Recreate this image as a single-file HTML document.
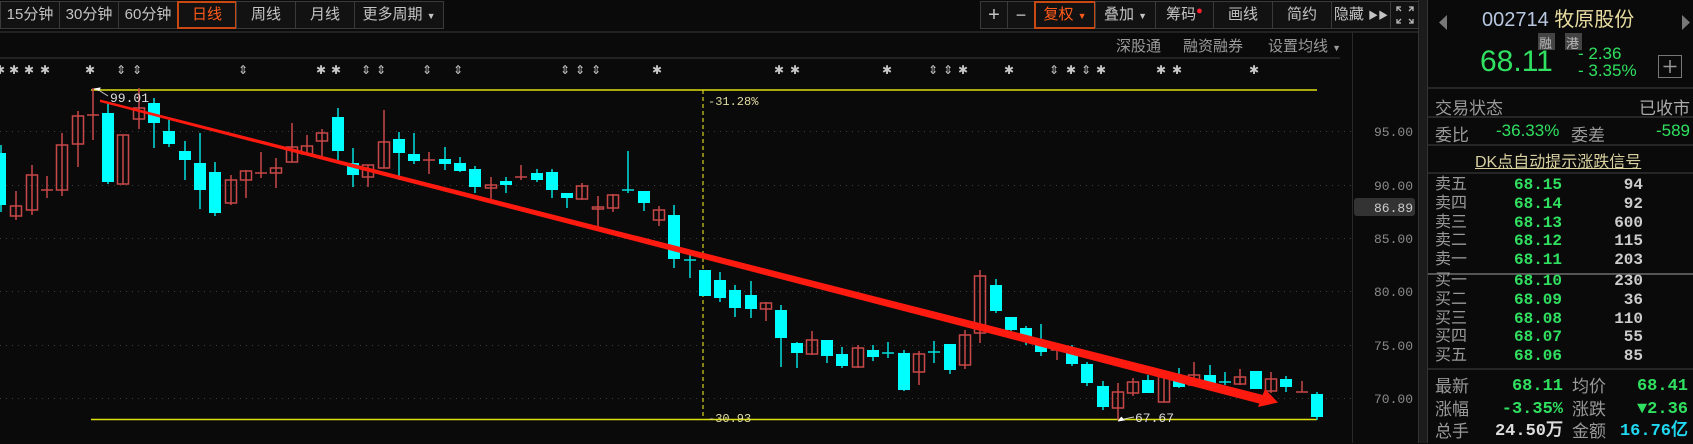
<!DOCTYPE html>
<html><head><meta charset="utf-8"><style>
*{margin:0;padding:0;box-sizing:border-box}
body{width:1693px;height:443px;background:#0a0a0a;overflow:hidden;position:relative;font-family:"Liberation Sans","Noto Sans CJK SC",sans-serif;color:#bbb}
.b{position:absolute;top:1px;height:28px;border:1px solid #3a3a3a;background:#121212;color:#c4c4c4;font-size:15px;line-height:26px;text-align:center}
.t{position:absolute;white-space:nowrap}
.g{color:#30e060}
.n{font-family:"Liberation Mono","Liberation Sans",monospace;font-weight:bold}
</style></head><body>
<div class="b" style="left:0;width:60px">15分钟</div>
<div class="b" style="left:59px;width:60px">30分钟</div>
<div class="b" style="left:118px;width:60px">60分钟</div>
<div class="b" style="left:177px;width:60px;border:2px solid #c84a12;color:#ff5a1a;line-height:24px">日线</div>
<div class="b" style="left:236px;width:60px">周线</div>
<div class="b" style="left:295px;width:60px">月线</div>
<div class="b" style="left:354px;width:90px">更多周期 <span style="font-size:9px">▼</span></div>

<div class="b" style="left:980px;width:28px;font-size:20px">+</div>
<div class="b" style="left:1007px;width:28px;font-size:18px">−</div>
<div class="b" style="left:1034px;width:62px;border:2px solid #c84a12;color:#ff5a1a;line-height:24px">复权 <span style="font-size:9px">▼</span></div>
<div class="b" style="left:1095px;width:61px">叠加 <span style="font-size:9px">▼</span></div>
<div class="b" style="left:1155px;width:59px">筹码<span style="color:#ff2030;font-size:11px;vertical-align:top;line-height:18px">●</span></div>
<div class="b" style="left:1213px;width:60px">画线</div>
<div class="b" style="left:1272px;width:60px">简约</div>
<div class="b" style="left:1331px;width:60px">隐藏 <span style="font-size:10px">▶▶</span></div>
<div class="b" style="left:1390px;width:29px;font-size:13px"><svg width="20" height="20" viewBox="0 0 20 20" style="margin-top:3px" stroke="#bbb" fill="none" stroke-width="1.3"><path d="M2 6V2h4M2 2l4 4M18 6V2h-4M18 2l-4 4M2 14v4h4M2 18l4-4M18 14v4h-4M18 18l-4-4"/></svg></div>

<div style="position:absolute;left:0;top:31px;width:1420px;height:2px;background:#222"></div>
<div style="position:absolute;left:0;top:57px;width:1340px;height:2px;background:#222"></div>
<div class="t" style="left:1116px;top:35px;font-size:15px;color:#9a9a9a">深股通</div>
<div class="t" style="left:1183px;top:35px;font-size:15px;color:#9a9a9a">融资融券</div>
<div class="t" style="left:1268px;top:35px;font-size:15px;color:#9a9a9a">设置均线 <span style="font-size:9px">▼</span></div>
<div style="position:absolute;left:1352px;top:31px;width:1px;height:412px;background:#2a2a2a"></div>
<div style="position:absolute;left:1418px;top:0;width:10px;height:443px;background:#1c1c1c;border-left:1px solid #333;border-right:1px solid #333"></div>

<svg style="position:absolute;left:0;top:0" width="1420" height="443">
<g stroke="#3c3c3c" stroke-dasharray="1,5" stroke-width="1">
<line x1="0" y1="131.5" x2="1352" y2="131.5"/><line x1="0" y1="185.5" x2="1352" y2="185.5"/><line x1="0" y1="238.5" x2="1352" y2="238.5"/><line x1="0" y1="291.5" x2="1352" y2="291.5"/><line x1="0" y1="345.5" x2="1352" y2="345.5"/><line x1="0" y1="398.5" x2="1352" y2="398.5"/>
</g>
<g font-family="Liberation Mono,monospace" font-size="13" fill="#8a8a8a">
<text x="1374" y="136">95.00</text><text x="1374" y="190">90.00</text><text x="1374" y="243">85.00</text><text x="1374" y="296">80.00</text><text x="1374" y="350">75.00</text><text x="1374" y="403">70.00</text>
</g>
<rect x="1354" y="198" width="61" height="18" rx="3" fill="#333"/>
<text x="1374" y="212" font-family="Liberation Mono,monospace" font-size="13" fill="#ccc">86.89</text>
<g font-family="DejaVu Sans,sans-serif" font-size="12" fill="#c8c8c8" text-anchor="middle">
<text x="0" y="74">✱</text><text x="14" y="74">✱</text><text x="29" y="74">✱</text><text x="45" y="74">✱</text><text x="90" y="74">✱</text><text x="121" y="74">⇕</text><text x="137" y="74">⇕</text><text x="243" y="74">⇕</text><text x="321" y="74">✱</text><text x="336" y="74">✱</text><text x="366" y="74">⇕</text><text x="381" y="74">⇕</text><text x="427" y="74">⇕</text><text x="458" y="74">⇕</text><text x="565" y="74">⇕</text><text x="580" y="74">⇕</text><text x="596" y="74">⇕</text><text x="657" y="74">✱</text><text x="779" y="74">✱</text><text x="795" y="74">✱</text><text x="887" y="74">✱</text><text x="933" y="74">⇕</text><text x="948" y="74">⇕</text><text x="963" y="74">✱</text><text x="1009" y="74">✱</text><text x="1054" y="74">⇕</text><text x="1071" y="74">✱</text><text x="1086" y="74">⇕</text><text x="1101" y="74">✱</text><text x="1161" y="74">✱</text><text x="1177" y="74">✱</text><text x="1254" y="74">✱</text>
</g>
<line x1="91" y1="90" x2="1317" y2="90" stroke="#e0e010" stroke-width="1.5"/>
<line x1="1110" y1="419.5" x2="1317" y2="419.5" stroke="#e0e010" stroke-width="1.5"/>
<line x1="91" y1="419.5" x2="1110" y2="419.5" stroke="#e0e010" stroke-width="1.5"/>
<line x1="703" y1="90" x2="703" y2="420" stroke="#d8d020" stroke-width="1.2" stroke-dasharray="4,3"/>
<g font-family="Liberation Mono,monospace" font-size="12" fill="#e0dca0">
<text x="708" y="105">-31.28%</text><text x="708" y="422">-30.93</text>
</g>
<g id="c">
<!-- candles -->
<g stroke="#c84848" stroke-width="1.5" fill="none">
<line x1="16" y1="191" x2="16" y2="220"/><rect x="10.5" y="206" width="11" height="10"/>
<line x1="32" y1="165" x2="32" y2="215"/><rect x="26.5" y="175" width="11" height="35"/>
<line x1="47" y1="176" x2="47" y2="198"/><line x1="41" y1="190" x2="53" y2="190"/>
<line x1="62" y1="133" x2="62" y2="196"/><rect x="56.5" y="145" width="11" height="45"/>
<line x1="78" y1="111" x2="78" y2="167"/><rect x="72.5" y="116" width="11" height="28"/>
<line x1="93" y1="88" x2="93" y2="140"/><line x1="87" y1="115" x2="99" y2="115"/>
<line x1="123" y1="135" x2="123" y2="185"/><rect x="117.5" y="135" width="11" height="49"/>
<line x1="139" y1="88" x2="139" y2="129"/><rect x="133.5" y="108" width="11" height="11"/>
<line x1="231" y1="175" x2="231" y2="205"/><rect x="225.5" y="180" width="11" height="23"/>
<line x1="246" y1="170" x2="246" y2="198"/><rect x="240.5" y="171" width="11" height="9"/>
<line x1="261" y1="152" x2="261" y2="178"/><line x1="255" y1="173" x2="267" y2="173"/>
<line x1="276" y1="158" x2="276" y2="188"/><rect x="270.5" y="168" width="11" height="5"/>
<line x1="292" y1="123" x2="292" y2="162"/><rect x="286.5" y="147" width="11" height="15"/>
<line x1="307" y1="135" x2="307" y2="154"/><rect x="301.5" y="146" width="11" height="8"/>
<line x1="322" y1="129" x2="322" y2="156"/><rect x="316.5" y="133" width="11" height="8"/>
<line x1="368" y1="165" x2="368" y2="187"/><rect x="362.5" y="165" width="11" height="12"/>
<line x1="384" y1="110" x2="384" y2="168"/><rect x="378.5" y="142" width="11" height="26"/>
<line x1="429" y1="152" x2="429" y2="174"/><line x1="423" y1="160" x2="435" y2="160"/>
<line x1="491" y1="177" x2="491" y2="203"/><rect x="485.5" y="185" width="11" height="3"/>
<line x1="521" y1="165" x2="521" y2="180"/><line x1="515" y1="177" x2="527" y2="177"/>
<line x1="582" y1="183" x2="582" y2="200"/><rect x="576.5" y="186" width="11" height="13"/>
<line x1="598" y1="196" x2="598" y2="230"/><rect x="592.5" y="207" width="11" height="2"/>
<line x1="613" y1="194" x2="613" y2="212"/><rect x="607.5" y="195" width="11" height="13"/>
<line x1="659" y1="206" x2="659" y2="226"/><rect x="653.5" y="210" width="11" height="10"/>
<line x1="766" y1="302" x2="766" y2="321"/><rect x="760.5" y="303" width="11" height="6"/>
<line x1="812" y1="331" x2="812" y2="355"/><rect x="806.5" y="340" width="11" height="14"/>
<line x1="858" y1="345" x2="858" y2="368"/><rect x="852.5" y="348" width="11" height="19"/>
<line x1="919" y1="351" x2="919" y2="385"/><rect x="913.5" y="354" width="11" height="18"/>
<line x1="965" y1="330" x2="965" y2="369"/><rect x="959.5" y="335" width="11" height="30"/>
<line x1="980" y1="270" x2="980" y2="343"/><rect x="974.5" y="276" width="11" height="57"/>
<line x1="1057" y1="345" x2="1057" y2="360"/><rect x="1051.5" y="348" width="11" height="2"/>
<line x1="1118" y1="383" x2="1118" y2="420"/><rect x="1112.5" y="392" width="11" height="16"/>
<line x1="1133" y1="378" x2="1133" y2="396"/><rect x="1127.5" y="382" width="11" height="11"/>
<line x1="1164" y1="375" x2="1164" y2="402"/><rect x="1158.5" y="375" width="11" height="27"/>
<line x1="1194" y1="362" x2="1194" y2="385"/><rect x="1188.5" y="375" width="11" height="10"/>
<line x1="1240" y1="369" x2="1240" y2="385"/><rect x="1234.5" y="377" width="11" height="7"/>
<line x1="1271" y1="372" x2="1271" y2="393"/><rect x="1265.5" y="379" width="11" height="12"/>
<line x1="1302" y1="381" x2="1302" y2="392"/><line x1="1296" y1="392" x2="1308" y2="392"/>
</g>
<g stroke="#00e0e0" stroke-width="1.5" fill="#00ffff">
<line x1="1" y1="145" x2="1" y2="212"/><rect x="-5" y="153" width="11" height="52" stroke="none"/>
<line x1="108" y1="103" x2="108" y2="184"/><rect x="102" y="113" width="12" height="69" stroke="none"/>
<line x1="154" y1="98" x2="154" y2="148"/><rect x="148" y="103" width="12" height="20" stroke="none"/>
<line x1="169" y1="120" x2="169" y2="147"/><rect x="163" y="131" width="12" height="13" stroke="none"/>
<line x1="185" y1="141" x2="185" y2="180"/><rect x="179" y="151" width="12" height="9" stroke="none"/>
<line x1="200" y1="133" x2="200" y2="209"/><rect x="194" y="163" width="12" height="27" stroke="none"/>
<line x1="215" y1="162" x2="215" y2="216"/><rect x="209" y="172" width="12" height="41" stroke="none"/>
<line x1="338" y1="108" x2="338" y2="160"/><rect x="332" y="117" width="12" height="34" stroke="none"/>
<line x1="353" y1="148" x2="353" y2="187"/><rect x="347" y="163" width="12" height="12" stroke="none"/>
<line x1="399" y1="132" x2="399" y2="180"/><rect x="393" y="139" width="12" height="14" stroke="none"/>
<line x1="414" y1="133" x2="414" y2="164"/><rect x="408" y="154" width="12" height="7" stroke="none"/>
<line x1="445" y1="147" x2="445" y2="170"/><rect x="439" y="159" width="12" height="5" stroke="none"/>
<line x1="460" y1="157" x2="460" y2="172"/><rect x="454" y="163" width="12" height="8" stroke="none"/>
<line x1="475" y1="166" x2="475" y2="193"/><rect x="469" y="169" width="12" height="18" stroke="none"/>
<line x1="506" y1="177" x2="506" y2="193"/><rect x="500" y="181" width="12" height="4" stroke="none"/>
<line x1="537" y1="169" x2="537" y2="182"/><rect x="531" y="173" width="12" height="7" stroke="none"/>
<line x1="552" y1="169" x2="552" y2="198"/><rect x="546" y="172" width="12" height="18" stroke="none"/>
<line x1="567" y1="193" x2="567" y2="208"/><rect x="561" y="193" width="12" height="5" stroke="none"/>
<line x1="628" y1="151" x2="628" y2="193"/><line x1="622" y1="190" x2="634" y2="190"/>
<line x1="644" y1="191" x2="644" y2="211"/><rect x="638" y="191" width="12" height="12" stroke="none"/>
<line x1="674" y1="205" x2="674" y2="268"/><rect x="668" y="215" width="12" height="44" stroke="none"/>
<line x1="690" y1="254" x2="690" y2="278"/><line x1="684" y1="260" x2="696" y2="260"/>
<line x1="705" y1="270" x2="705" y2="296"/><rect x="699" y="270" width="12" height="26" stroke="none"/>
<line x1="720" y1="272" x2="720" y2="302"/><rect x="714" y="280" width="12" height="18" stroke="none"/>
<line x1="735" y1="285" x2="735" y2="317"/><rect x="729" y="290" width="12" height="18" stroke="none"/>
<line x1="751" y1="281" x2="751" y2="318"/><rect x="745" y="295" width="12" height="14" stroke="none"/>
<line x1="781" y1="305" x2="781" y2="367"/><rect x="775" y="310" width="12" height="28" stroke="none"/>
<line x1="797" y1="342" x2="797" y2="368"/><rect x="791" y="343" width="12" height="10" stroke="none"/>
<line x1="827" y1="340" x2="827" y2="363"/><rect x="821" y="340" width="12" height="16" stroke="none"/>
<line x1="842" y1="347" x2="842" y2="368"/><rect x="836" y="354" width="12" height="12" stroke="none"/>
<line x1="873" y1="345" x2="873" y2="361"/><rect x="867" y="350" width="12" height="7" stroke="none"/>
<line x1="888" y1="342" x2="888" y2="358"/><line x1="882" y1="353" x2="894" y2="353"/>
<line x1="904" y1="350" x2="904" y2="391"/><rect x="898" y="353" width="12" height="37" stroke="none"/>
<line x1="934" y1="341" x2="934" y2="363"/><line x1="928" y1="352" x2="940" y2="352"/>
<line x1="950" y1="344" x2="950" y2="374"/><rect x="944" y="344" width="12" height="26" stroke="none"/>
<line x1="996" y1="279" x2="996" y2="313"/><rect x="990" y="285" width="12" height="26" stroke="none"/>
<line x1="1011" y1="317" x2="1011" y2="338"/><rect x="1005" y="317" width="12" height="13" stroke="none"/>
<line x1="1026" y1="326" x2="1026" y2="345"/><rect x="1020" y="328" width="12" height="12" stroke="none"/>
<line x1="1041" y1="324" x2="1041" y2="356"/><rect x="1035" y="345" width="12" height="7" stroke="none"/>
<line x1="1072" y1="345" x2="1072" y2="366"/><rect x="1066" y="352" width="12" height="12" stroke="none"/>
<line x1="1087" y1="362" x2="1087" y2="386"/><rect x="1081" y="364" width="12" height="19" stroke="none"/>
<line x1="1103" y1="381" x2="1103" y2="410"/><rect x="1097" y="386" width="12" height="21" stroke="none"/>
<line x1="1148" y1="375" x2="1148" y2="393"/><rect x="1142" y="380" width="12" height="13" stroke="none"/>
<line x1="1179" y1="368" x2="1179" y2="388"/><rect x="1173" y="380" width="12" height="7" stroke="none"/>
<line x1="1210" y1="365" x2="1210" y2="385"/><rect x="1204" y="375" width="12" height="8" stroke="none"/>
<line x1="1225" y1="372" x2="1225" y2="385"/><line x1="1219" y1="382" x2="1231" y2="382"/>
<line x1="1256" y1="371" x2="1256" y2="389"/><rect x="1250" y="371" width="12" height="18" stroke="none"/>
<line x1="1286" y1="376" x2="1286" y2="392"/><rect x="1280" y="379" width="12" height="8" stroke="none"/>
<line x1="1317" y1="392" x2="1317" y2="420"/><rect x="1311" y="394" width="12" height="23" stroke="none"/>
</g>
</g>
<polygon points="100,99.5 100,102 1261,404 1263,395" fill="#ff1a10"/>
<polygon points="1278,402.5 1265,389 1258,407" fill="#ff1a10"/>
<polyline points="94,89 100,88 99,91" fill="#fff" stroke="#fff"/>
<line x1="100" y1="91" x2="108" y2="96" stroke="#ccc"/>
<text x="110" y="102" font-family="Liberation Mono,monospace" font-size="13" fill="#ddd">99.01</text>
<polyline points="1118,421 1124,420 1121,417" fill="#fff" stroke="#fff"/>
<line x1="1124" y1="419" x2="1134" y2="417" stroke="#ccc"/>
<text x="1135" y="422" font-family="Liberation Mono,monospace" font-size="13" fill="#ddd">67.67</text>
</svg>

<!-- right panel -->
<svg style="position:absolute;left:1428px;top:0" width="265" height="443">
<polygon points="19,15 19,30 11,22.5" fill="#777"/>
<polygon points="254,15 254,30 262,22.5" fill="#777"/>
<rect x="110" y="33" width="17" height="17" fill="#444"/>
<rect x="137" y="33" width="17" height="17" fill="#444"/>
<rect x="230.5" y="55.5" width="23" height="22" fill="none" stroke="#777"/>
<path d="M242 60v13M235.5 66.5h13" stroke="#999" stroke-width="1.5"/>
<rect x="0" y="87" width="265" height="2" fill="#262626"/>
<rect x="0" y="116" width="265" height="2" fill="#262626"/>
<rect x="0" y="144" width="265" height="2" fill="#262626"/>
<rect x="0" y="172" width="265" height="2" fill="#262626"/>
<rect x="0" y="273" width="265" height="2" fill="#555"/>
<rect x="0" y="368" width="265" height="2" fill="#262626"/>
</svg>
<div class="t" style="left:1482px;top:3px;font-size:20px"><span style="color:#b8c8e0">002714</span> <span style="color:#e8dca0">牧原股份</span></div>
<div class="t" style="left:1539px;top:33px;font-size:13px;color:#bbb">融</div>
<div class="t" style="left:1566px;top:33px;font-size:13px;color:#bbb">港</div>
<div class="t g" style="left:1480px;top:45px;font-size:30px">68.11</div>
<div class="t g" style="left:1578px;top:44px;font-size:17px">- 2.36</div>
<div class="t g" style="left:1578px;top:61px;font-size:17px">- 3.35%</div>
<div class="t" style="left:1435px;top:94px;font-size:17px;color:#999">交易状态</div>
<div class="t" style="right:3px;top:94px;font-size:17px;color:#aaa">已收市</div>
<div class="t" style="left:1435px;top:121px;font-size:17px;color:#999">委比</div>
<div class="t g" style="left:1496px;top:121px;font-size:17px">-36.33%</div>
<div class="t" style="left:1571px;top:121px;font-size:17px;color:#999">委差</div>
<div class="t g" style="right:3px;top:121px;font-size:17px">-589</div>
<div class="t" style="left:1475px;top:148px;font-size:16px;color:#d8d0a0;text-decoration:underline">DK点自动提示涨跌信号</div>
<div style="position:absolute;left:1435px;top:176px;width:255px;font-size:16px;line-height:18.8px">
<div style="position:relative;height:94px">
<div class="t" style="left:0;top:0;color:#999;line-height:18.8px">卖五<br>卖四<br>卖三<br>卖二<br>卖一</div>
<div class="t g n" style="right:128px;top:0;text-align:right">68.15<br>68.14<br>68.13<br>68.12<br>68.11</div>
<div class="t n" style="right:47px;top:0;text-align:right;color:#ccc">94<br>92<br>600<br>115<br>203</div>
</div>
<div style="position:relative;height:94px;margin-top:2px">
<div class="t" style="left:0;top:0;color:#999;line-height:18.8px">买一<br>买二<br>买三<br>买四<br>买五</div>
<div class="t g n" style="right:128px;top:0;text-align:right">68.10<br>68.09<br>68.08<br>68.07<br>68.06</div>
<div class="t n" style="right:47px;top:0;text-align:right;color:#ccc">230<br>36<br>110<br>55<br>85</div>
</div>
</div>
<div style="position:absolute;left:1435px;top:376px;width:255px;font-size:17px;line-height:22.5px">
<div class="t" style="left:0;top:0;color:#999">最新<br>涨幅<br>总手</div>
<div class="t n" style="right:127px;top:0;text-align:right"><span class="g">68.11</span><br><span class="g">-3.35%</span><br><span style="color:#ddd">24.50万</span></div>
<div class="t" style="left:137px;top:0;color:#999">均价<br>涨跌<br>金额</div>
<div class="t n" style="right:2px;top:0;text-align:right"><span class="g">68.41</span><br><span class="g">▼2.36</span><br><span style="color:#20d8f0">16.76亿</span></div>
</div>
</body></html>
